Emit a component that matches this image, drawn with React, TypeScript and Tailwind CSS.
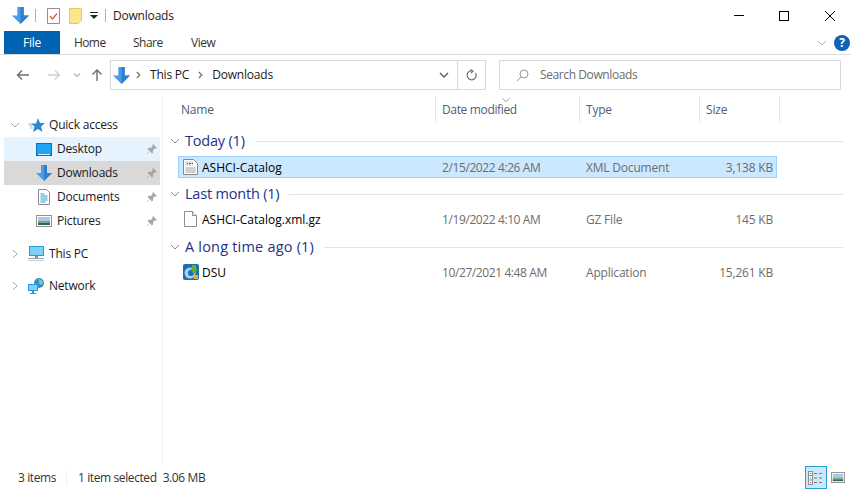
import React from "react";

const font = "font-['Open_Sans','Noto_Sans',sans-serif]";

const DownloadArrow: React.FC<{ size?: number }> = ({ size = 18 }) => (
  <svg width={size} height={size} viewBox="1 1 16 16">
    <path d="M6 1h6v8h5l-8 8-8-8h5z" fill="#4a9ce6" />
    <path d="M9 1h3v8h5l-8 8z" fill="#2f7fd0" />
  </svg>
);

const Pin: React.FC = () => (
  <svg width="12" height="12" viewBox="0 0 12 12" className="shrink-0">
    <path d="M7 1l4 4-1 .6-1-.3-2 2 .2 2L6 10.500 3.800 8.200 1.500 11 1 10.500l2.800-2.300L1.500 6l1.200-1.200 2 .2 2-2-.3-1z" fill="#a6a6a6" />
  </svg>
);

const Chevron: React.FC<{ open?: boolean; color?: string }> = ({ open, color = "#a6a6a6" }) => (
  <svg width="10" height="10" viewBox="0 0 10 10" fill="none" stroke={color} strokeWidth="1">
    {open ? <path d="M1 3l4 4 4-4" /> : <path d="M3 1l4 4-4 4" />}
  </svg>
);

const DesktopIcon = () => (
  <svg width="16" height="13" viewBox="0 0 16 13">
    <rect x="0" y="0" width="16" height="13" fill="#0f6fb8" />
    <rect x="1" y="1" width="14" height="10" fill="#1ea5f2" />
    <rect x="2" y="11" width="12" height="1" fill="#d8eefa" />
  </svg>
);

const DocumentsIcon = () => (
  <svg width="12" height="16" viewBox="0 0 12 16">
    <path d="M.5.500h8l3 3v12h-11z" fill="#fff" stroke="#8a8a8a" />
    <path d="M2.500 5h4M2.500 7h7M2.500 9h7M2.500 11h7M2.500 13h5" stroke="#2e9bd6" />
  </svg>
);

const PicturesIcon: React.FC<{ w?: number; h?: number }> = ({ w = 16, h = 12 }) => (
  <svg width={w} height={h} viewBox="0 0 16 12" preserveAspectRatio="none">
    <rect x=".5" y=".5" width="15" height="11" fill="#fff" stroke="#8f8f8f" />
    <rect x="2" y="2" width="12" height="4" fill="#a9c9ea" />
    <rect x="2" y="6" width="12" height="2" fill="#7fa58a" />
    <rect x="2" y="8" width="12" height="2" fill="#2f6a50" />
  </svg>
);

const MonitorIcon: React.FC = () => (
  <svg width="17" height="16" viewBox="0 0 17 16">
    <rect x="1" y="0" width="15" height="10" fill="#1f9be8" />
    <rect x="2" y="1" width="13" height="8" fill="#7fd0f7" />
    <rect x="7" y="10" width="3" height="2" fill="#7a95a8" />
    <rect x="0" y="12" width="16" height="1" fill="#8ba6b8" />
    <rect x="0" y="14" width="16" height="1" fill="#c4d0d8" />
  </svg>
);

const NetworkIcon: React.FC = () => (
  <svg width="17" height="16" viewBox="0 0 17 16">
    <circle cx="11" cy="5" r="5" fill="#2f8fd0" />
    <path d="M9 1c2 1 3 3 2 5l3 1 1-3c-1-2-3-3-6-3z" fill="#8cc9a0" />
    <rect x="0" y="6" width="10" height="7" fill="#1f9be8" />
    <rect x="1" y="7" width="8" height="5" fill="#7fd0f7" />
    <rect x="4" y="13" width="2" height="2" fill="#6a8598" />
    <rect x="2" y="15" width="6" height="1" fill="#6a8598" />
  </svg>
);

const XmlIcon = () => (
  <svg width="15" height="16" viewBox="0 0 15 16">
    <path d="M.5.500h10l4 4v11H.5z" fill="#fff" stroke="#8a8a8a" />
    <rect x="2" y="2" width="8" height="5" fill="#e2e2e2" />
    <path d="M4 4.500h1M6 4.500h2M9 4.500h1" stroke="#0d7a4a" />
    <path d="M2.500 9h10M2.500 11h10M2.500 13h10" stroke="#a0a0a0" />
  </svg>
);

const FileIcon = () => (
  <svg width="13" height="16" viewBox="0 0 13 16">
    <path d="M.5.500h8l4 4v11H.5z" fill="#fff" stroke="#8c8c8c" />
    <path d="M8.500.500v4h4" fill="#f2f2f2" stroke="#8c8c8c" />
  </svg>
);

const DsuIcon = () => (
  <svg width="16" height="16" viewBox="0 0 16 16">
    <rect width="16" height="16" rx="2" fill="#1f6fb0" />
    <circle cx="7" cy="9" r="5.500" fill="#a9d2ee" />
    <circle cx="8" cy="9" r="3" fill="#1f6fb0" />
    <path d="M9 1h4v4h2l-4 5-4-5h2z" fill="#5fb02f" />
    <rect x="11" y="11" width="4" height="4" fill="#f0a830" />
  </svg>
);

const NavRow: React.FC<{
  label: string;
  icon: React.ReactNode;
  className?: string;
}> = ({ label, icon, className }) => (
  <div className={`ml-1 mr-[2px] h-6 flex items-center pl-[32px] ${className ?? ""}`}>
    <div className="w-[16px] flex justify-center">{icon}</div>
    <span className="ml-[5px] flex-1">{label}</span>
    <div className="mr-[2px]">
      <Pin />
    </div>
  </div>
);

const NavRoot: React.FC<{
  label: string;
  icon: React.ReactNode;
  open?: boolean;
  className?: string;
}> = ({ label, icon, open, className }) => (
  <div className={`h-6 flex items-center pl-[10px] ${className ?? ""}`}>
    <Chevron open={open} />
    <div className="w-[19px] ml-[7px] flex justify-center">{icon}</div>
    <span className="ml-[3px]">{label}</span>
  </div>
);

const GroupHeader: React.FC<{ label: string; className?: string; labelClass?: string }> = ({
  label,
  className,
  labelClass,
}) => (
  <div className={`h-[28px] flex items-center pl-[7px] pr-[8px] ${className ?? ""}`}>
    <Chevron open color="#8a8a8a" />
    <span className={`ml-[5px] text-[14.5px] text-[#1e3287] ${labelClass ?? ""}`}>{label}</span>
    <div className="flex-1 ml-[10px] h-px bg-[#e2e2e2]" />
  </div>
);

const FileRow: React.FC<{
  icon: React.ReactNode;
  name: string;
  date: string;
  type: string;
  size: string;
  selected?: boolean;
  className?: string;
}> = ({ icon, name, date, type, size, selected, className }) => (
  <div
    className={`ml-[15px] w-[599px] h-[22px] flex items-center border ${
      selected ? "bg-[#cce8ff] border-[#99d1ff]" : "border-transparent"
    } ${className ?? ""}`}
  >
    <div className="w-[23px] flex justify-center">{icon}</div>
    <span className="w-[240px] pt-px text-black truncate tracking-normal">{name}</span>
    <span className="w-[144px] pt-px text-[#6d6d6d] tracking-[-0.4px]">{date}</span>
    <span className="w-[100px] pt-px text-[#6d6d6d]">{type}</span>
    <span className="w-[87px] pt-px text-right text-[#6d6d6d]">{size}</span>
  </div>
);

function Caret({ className }: { className?: string }) {
  return (
    <svg width="5" height="8" viewBox="0 0 5 8" fill="none" stroke="#707070" strokeWidth="1.200" className={className}>
      <path d="M.8 1l3 3-3 3" />
    </svg>
  );
}

export default function App() {
  return (
    <div className={`w-[851px] h-[490px] bg-white flex flex-col overflow-hidden text-[12px] tracking-[-0.2px] text-[#1a1a1a] ${font}`}>
      {/* title bar */}
      <div className="h-[31px] flex items-center pl-[12px] shrink-0">
        <DownloadArrow size={17} />
        <div className="ml-[6px] w-px h-[13px] bg-[#b0b0b0]" />
        <svg width="13" height="16" viewBox="0 0 13 16" className="ml-[11px]">
          <path d="M.5.500h12v15H.5z" fill="#fff" stroke="#8f8f8f" />
          <path d="M3 8l2.500 3L10 5.500" fill="none" stroke="#e8622c" strokeWidth="1.400" />
        </svg>
        <svg width="13" height="16" viewBox="0 0 13 16" className="ml-[9px]">
          <path d="M.5.500h12v12l-3 3H.5z" fill="#fde58c" stroke="#e8c860" />
        </svg>
        <svg width="8" height="7" viewBox="0 0 8 7" className="ml-[8px]">
          <path d="M0 0h8v1H0zM0 3h8L4 7z" fill="#222" />
        </svg>
        <div className="ml-[7px] w-px h-[13px] bg-[#b0b0b0]" />
        <span className="ml-[7px]">Downloads</span>
        <div className="ml-auto flex items-center">
          <div className="w-[40px] flex justify-center">
            <div className="w-[10px] h-px bg-black" />
          </div>
          <div className="w-[50px] flex justify-center">
            <div className="w-[10px] h-[10px] border border-black" />
          </div>
          <div className="w-[42px] flex justify-center">
            <svg width="10" height="10" viewBox="0 0 10 10" stroke="#000" strokeWidth="1">
              <path d="M0 0l10 10M10 0L0 10" />
            </svg>
          </div>
        </div>
      </div>

      {/* ribbon tabs */}
      <div className="h-[24px] flex items-stretch border-b border-[#dadbdc] pl-[4px] shrink-0">
        <div className="w-[56px] h-[23px] bg-[#0063b1] text-white flex items-center justify-center">File</div>
        <div className="ml-[14px] w-[59px] self-center text-[#333] tracking-[-0.6px]">Home</div>
        <div className="w-[58px] self-center text-[#333] tracking-[-0.5px]">Share</div>
        <div className="self-center text-[#333] tracking-[-0.5px]">View</div>
        <div className="ml-auto flex items-center">
          <Chevron open color="#b0b0b0" />
          <div className="ml-[7px] mr-px w-[16px] h-[16px] rounded-full bg-[#0f62b8] text-white text-[12px] font-bold flex items-center justify-center">?</div>
        </div>
      </div>

      {/* address bar */}
      <div className="h-[30px] mt-[5px] flex items-center shrink-0">
        <div className="w-[110px] flex items-center pl-[16px]">
          <svg width="14" height="12" viewBox="0 0 14 12" fill="none" stroke="#6e6e6e" strokeWidth="1.400">
            <path d="M13 6H2M6 1.500L1.500 6 6 10.500" />
          </svg>
          <svg width="14" height="12" viewBox="0 0 14 12" fill="none" stroke="#d0d0d0" strokeWidth="1.400" className="ml-[17px]">
            <path d="M1 6h11M8 1.500L12.500 6 8 10.500" />
          </svg>
          <svg width="8" height="5" viewBox="0 0 8 5" fill="none" stroke="#b0b0b0" strokeWidth="1.200" className="ml-[12px]">
            <path d="M1 .5l3 3 3-3" />
          </svg>
          <svg width="12" height="14" viewBox="0 0 12 14" fill="none" stroke="#6e6e6e" strokeWidth="1.400" className="ml-[10px]">
            <path d="M6 13V2M1.500 6.500L6 2l4.500 4.500" />
          </svg>
        </div>
        <div className="w-[376px] h-[30px] flex items-center border border-[#d9d9d9]">
          <div className="ml-[2px] flex">
            <DownloadArrow size={17} />
          </div>
          <Caret className="ml-[6px]" />
          <span className="ml-[9px]">This PC</span>
          <Caret className="ml-[9px]" />
          <span className="ml-[9px]">Downloads</span>
          <svg width="10" height="6" viewBox="0 0 10 6" fill="none" stroke="#555" strokeWidth="1.300" className="ml-auto mr-[5px]">
            <path d="M1 1l4 4 4-4" />
          </svg>
          <div className="w-px h-full bg-[#d9d9d9] ml-[3px]" />
          <svg width="13" height="13" viewBox="0 0 13 13" fill="none" stroke="#707070" strokeWidth="1.200" className="mx-[7px]">
            <path d="M10.500 4A4.500 4.500 0 1 1 8 2M5.500 .5L8 2 6 4" />
          </svg>
        </div>
        <div className="ml-[13px] w-[342px] h-[30px] flex items-center border border-[#d9d9d9] pl-[16px] text-[#6d6d6d] tracking-[-0.4px]">
          <svg width="13" height="13" viewBox="0 0 13 13" fill="none" strokeWidth="1">
            <circle cx="8" cy="5" r="4" stroke="#9a9a9a" />
            <path d="M5 8l-4 4" stroke="#b58a8a" />
          </svg>
          <span className="ml-[11px]">Search Downloads</span>
        </div>
      </div>

      {/* body */}
      <div className="flex-1 flex min-h-0 mt-[7px]">
        <div className="w-[163px] shrink-0 border-r border-[#efefef] pt-[16px]">
          <NavRoot label="Quick access" open icon={
            <svg width="17" height="15" viewBox="0 0 17 15">
              <path d="M10 0l2 5h5l-4 3.500L14.500 14 10 11l-5 3 1.500-5.500L3 5.500h5z" fill="#2f86d0" />
              <path d="M0 6h4M1 8h3M2 10h3" stroke="#8cc0e8" />
            </svg>
          } />
          <NavRow label="Desktop" icon={<DesktopIcon />} className="bg-[#e5f3ff]" />
          <NavRow label="Downloads" icon={<DownloadArrow size={16} />} className="bg-[#d9d9d9]" />
          <NavRow label="Documents" icon={<DocumentsIcon />} />
          <NavRow label="Pictures" icon={<PicturesIcon />} />
          <NavRoot label="This PC" icon={<MonitorIcon />} className="mt-[9px]" />
          <NavRoot label="Network" icon={<NetworkIcon />} className="mt-[8px]" />
        </div>

        <div className="flex-1 min-w-0">
          <div className="h-[25px] flex items-center text-[#4c607a]">
            <div className="w-[273px] h-full flex items-center pl-[18px] pt-px border-r border-[#e5e5e5]">Name</div>
            <div className="w-[144px] h-full flex items-center pl-[6px] pt-px border-r border-[#e5e5e5] relative tracking-[-0.35px]">
              Date modified
              <svg width="8" height="4" viewBox="0 0 8 4" fill="none" stroke="#a0a0a0" className="absolute left-[66px] top-[1px]">
                <path d="M.5 .5L4 3.500 7.500 .5" />
              </svg>
            </div>
            <div className="w-[120px] h-full flex items-center pl-[6px] pt-px border-r border-[#e5e5e5]">Type</div>
            <div className="w-[80px] h-full flex items-center pl-[6px] pt-px border-r border-[#e5e5e5]">Size</div>
          </div>
          <GroupHeader label="Today (1)" className="mt-[5px]" />
          <FileRow icon={<XmlIcon />} name="ASHCI-Catalog" date="2/15/2022 4:26 AM" type="XML Document" size="3,138 KB" selected className="mt-px" />
          <GroupHeader label="Last month (1)" className="mt-[2px]" />
          <FileRow icon={<FileIcon />} name="ASHCI-Catalog.xml.gz" date="1/19/2022 4:10 AM" type="GZ File" size="145 KB" />
          <GroupHeader label="A long time ago (1)" labelClass="tracking-[0.2px]" className="mt-[3px]" />
          <FileRow icon={<DsuIcon />} name="DSU" date="10/27/2021 4:48 AM" type="Application" size="15,261 KB" />
        </div>
      </div>

      {/* status bar */}
      <div className="h-[25px] flex items-center pl-[18px] shrink-0 text-[#333] tracking-[-0.4px]">
        <span className="pt-px">3 items</span>
        <div className="ml-[10px] w-px h-[14px] bg-[#efefef]" />
        <span className="ml-[11px] pt-px">1 item selected</span>
        <span className="ml-[6px] pt-px">3.06 MB</span>
        <div className="ml-auto flex items-center pr-[6px]">
          <div className="w-[22px] h-[23px] bg-[#cce8ff] border border-[#26a0da] flex items-center justify-center">
            <svg width="16" height="14" viewBox="0 0 16 14">
              <rect x=".5" y=".5" width="4" height="13" fill="#fff" stroke="#8f8f8f" />
              <path d="M1 4.500h3M1 9h3" stroke="#8f8f8f" />
              <path d="M2 2.500h1" stroke="#555" />
              <path d="M2 7h1" stroke="#2e9bd6" />
              <path d="M2 11.500h1" stroke="#c0392b" />
              <path d="M6 2.500h3M11 2.500h3M6 7h3M11 7h3M6 11.500h3M11 11.500h3" stroke="#777" />
            </svg>
          </div>
          <div className="ml-[4px] flex">
            <PicturesIcon w={14} h={11} />
          </div>
        </div>
      </div>
    </div>
  );
}
